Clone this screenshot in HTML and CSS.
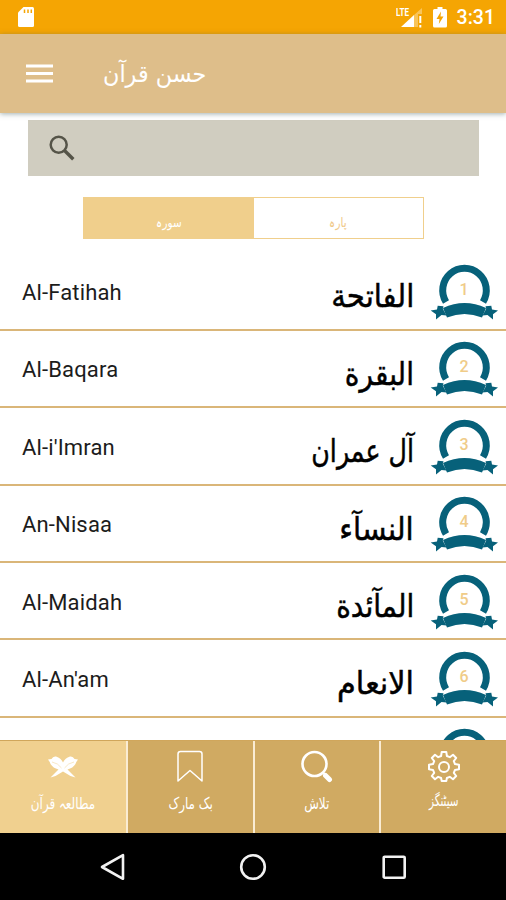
FILE: index.html
```html
<!DOCTYPE html>
<html lang="en">
<head>
    <meta charset="UTF-8">
    <meta name="viewport" content="width=device-width, initial-scale=1.0">
    <title>حسن قرآن</title>
    <link rel="stylesheet" href="styles.css">
</head>
<body>
    <!-- Shared shapes -->
    <svg class="defs" width="0" height="0">
        <symbol id="badge" viewBox="0 0 68 56">
            <path d="M16 38A21.8 22 0 1 1 53 38" fill="none" stroke="#07617a" stroke-width="7"/>
            <path d="M13 44Q34.5 34 56 44L52 53.5Q34.5 46.5 17 53.5Z" fill="#07617a"/>
            <path d="M13.5 42.3L7.7 41.8L7 45.4L.7 46.5L6 50.3V55.5L11.5 51L16.5 51.5L12.8 44.8Z" fill="#07617a"/>
            <path d="M55.5 42.3L61.3 41.8L62 45.4L68 46.5L63 50.3V55.5L57.5 51L52.5 51.5L56.2 44.8Z" fill="#07617a"/>
        </symbol>
    </svg>

    <div class="status-bar">
        <svg width="16" height="21" viewBox="0 0 16 21">
            <path d="M5.5 0H14.5Q16 0 16 1.5V18.5Q16 20 14.5 20H1.5Q0 20 0 18.5V5.5Z" fill="#fff"/>
            <path d="M6.5 2.5V6M10 2.5V6M13.3 2.5V6" stroke="#f5a503" stroke-width="1.5"/>
        </svg>
        <div class="status-icons">
            <svg width="27" height="21" viewBox="0 0 27 21">
                <text x="0" y="8.5" class="lte" textLength="13" lengthAdjust="spacingAndGlyphs">LTE</text>
                <path d="M5 20L18 8V20Z" fill="#fff"/>
                <path d="M18 8L26 1V7H22V20H18Z" fill="#fff" opacity=".35"/>
                <path d="M24.3 9V16M24.3 18V20.5" stroke="#fff" stroke-width="2"/>
            </svg>
            <svg width="14" height="21" viewBox="0 0 14 21">
                <path d="M1.5 2H4.5V0H9.5V2H12.5Q14 2 14 3.5V19Q14 20.5 12.5 20.5H1.5Q0 20.5 0 19V3.5Q0 2 1.5 2Z" fill="#fff"/>
                <path d="M8 4.5L3.5 12H6.5L5.8 17L10.5 9.5H7.5Z" fill="#f5a503"/>
            </svg>
            <span class="time">3:31</span>
        </div>
    </div>

    <div class="toolbar">
        <svg width="27" height="20" viewBox="0 0 27 20">
            <path d="M0 2H27M0 9.5H27M0 17H27" stroke="#fff" stroke-width="3"/>
        </svg>
        <h1 lang="ur" dir="rtl">حسن قرآن</h1>
    </div>

    <div class="content">
        <div class="search">
            <svg width="26" height="26" viewBox="0 0 26 26" fill="none" stroke="#555448">
                <circle cx="9.7" cy="9.7" r="8" stroke-width="2.5"/>
                <path d="M15.5 15.5L24.3 24.3" stroke-width="3.4"/>
            </svg>
        </div>

        <div class="tabs" lang="ur">
            <div class="tab active"><span>سورہ</span></div>
            <div class="tab"><span>پارہ</span></div>
        </div>

        <!-- Surah list -->
        <div class="list">
            <div class="row">
                <span class="name">Al-Fatihah</span>
                <span class="arabic" lang="ar" dir="rtl">الفاتحة</span>
                <div class="badge"><svg width="68" height="56"><use href="#badge"/></svg><span>1</span></div>
            </div>
            <div class="row">
                <span class="name">Al-Baqara</span>
                <span class="arabic narrow" lang="ar" dir="rtl">البقرة</span>
                <div class="badge"><svg width="68" height="56"><use href="#badge"/></svg><span>2</span></div>
            </div>
            <div class="row">
                <span class="name">Al-i'Imran</span>
                <span class="arabic narrower" lang="ar" dir="rtl">آل عمران</span>
                <div class="badge"><svg width="68" height="56"><use href="#badge"/></svg><span>3</span></div>
            </div>
            <div class="row">
                <span class="name">An-Nisaa</span>
                <span class="arabic" lang="ar" dir="rtl">النسآء</span>
                <div class="badge"><svg width="68" height="56"><use href="#badge"/></svg><span>4</span></div>
            </div>
            <div class="row">
                <span class="name">Al-Maidah</span>
                <span class="arabic narrow" lang="ar" dir="rtl">المآئدة</span>
                <div class="badge"><svg width="68" height="56"><use href="#badge"/></svg><span>5</span></div>
            </div>
            <div class="row">
                <span class="name">Al-An'am</span>
                <span class="arabic wide" lang="ar" dir="rtl">الانعام</span>
                <div class="badge"><svg width="68" height="56"><use href="#badge"/></svg><span>6</span></div>
            </div>
            <div class="row">
                <div class="badge"><svg width="68" height="56"><use href="#badge"/></svg></div>
            </div>
        </div>
    </div>

    <!-- Bottom menu -->
    <div class="bottom-menu" lang="ur">
        <div class="menu-item active">
            <svg width="32" height="34" viewBox="0 0 32 34">
                <path d="M1 9.5L4.5 9Q6 6 9 6.5Q14 8 16 12.5Q18 8 23 6.5Q26 6 27.5 9L31 9.5Q29 12 28.5 14Q26 18 20.5 19.5L28.5 27.5L23.5 26L16 21.5L8.5 26L3.5 27.5L11.5 19.5Q6 18 3.5 14Q3 12 1 9.5Z" fill="#fff"/>
                <path d="M5 12Q11 13 14.5 18M27 12Q21 13 17.5 18" fill="none" stroke="#f0d08f" stroke-width=".5"/>
            </svg>
            <span>مطالعہ قرآن</span>
        </div>
        <div class="menu-item">
            <svg width="32" height="34" viewBox="0 0 32 34">
                <path d="M4 31V4Q4 1.5 6.5 1.5H25.5Q28 1.5 28 4V31L16 20.5Z" fill="none" stroke="#fff" stroke-width="1.5" stroke-linejoin="round"/>
            </svg>
            <span>بک مارک</span>
        </div>
        <div class="menu-item">
            <svg width="32" height="34" viewBox="0 0 32 34" fill="none" stroke="#fff">
                <circle cx="13.5" cy="14" r="12" stroke-width="2.6"/>
                <path d="M24.5 25.5L28.5 29.5" stroke-width="5" stroke-linecap="round"/>
                <path d="M22 22.5L25 25.5" stroke-width="2"/>
            </svg>
            <span>تلاش</span>
        </div>
        <div class="menu-item">
            <svg width="32" height="34" viewBox="0 0 32 34" fill="none" stroke="#fff" stroke-width="2">
                <path stroke-linejoin="round" d="M13.1 6L13.7 2H18.3L18.9 6L21.8 7.2L25 4.8L28.2 8L25.8 11.2L27 14.1L31 14.7V19.3L27 19.9L25.8 22.8L28.2 26L25 29.2L21.8 26.8L18.9 28L18.3 31H13.7L13.1 28L10.2 26.8L7 29.2L3.8 26L6.2 22.8L5 19.9L1 19.3V14.7L5 14.1L6.2 11.2L3.8 8L7 4.8L10.2 7.2Z"/>
                <circle cx="16" cy="17" r="5"/>
            </svg>
            <span class="settings">سیٹنگز</span>
        </div>
    </div>

    <div class="nav-bar">
        <svg width="28" height="28" viewBox="0 0 28 28"><path d="M3 14L24 2.2V25.8Z"/></svg>
        <svg width="28" height="28" viewBox="0 0 28 28"><circle cx="14" cy="14" r="11.8"/></svg>
        <svg width="28" height="28" viewBox="0 0 28 28"><rect x="3.7" y="3.7" width="21" height="21" rx="1"/></svg>
    </div>
</body>
</html>
```
FILE: styles.css
```css
* {
    box-sizing: border-box;
}

body {
    margin: 0;
    height: 900px;
    display: flex;
    flex-direction: column;
    overflow: hidden;
    font-family: Roboto, "DejaVu Sans", sans-serif;
    background: #fff;
}

.defs {
    display: none;
}

.status-bar {
    height: 34px;
    flex: none;
    display: flex;
    justify-content: space-between;
    padding: 7px 11px 0 18px;
    background: #f5a503;
    color: #fff;
}

.status-icons {
    display: flex;
    gap: 10px;
}

.lte {
    font-size: 11px;
    font-weight: bold;
    fill: #fff;
}

.time {
    font-size: 19.5px;
    font-weight: 500;
    line-height: 22px;
}

/* Header */
.toolbar {
    height: 79px;
    flex: none;
    display: flex;
    align-items: center;
    gap: 50px;
    padding-left: 26px;
    background: #debe8a;
    box-shadow: 0 1px 5px rgba(70, 100, 100, 0.5);
    color: #fff;
    z-index: 1;
}

.toolbar h1 {
    margin: 0;
    font-family: "DejaVu Sans", sans-serif;
    font-size: 24px;
    font-weight: normal;
    transform: scaleX(0.93);
    transform-origin: left center;
}

.content {
    flex: 1;
    min-height: 0;
    overflow: hidden;
}

.search {
    height: 56px;
    margin: 7px 27px 0 28px;
    padding: 15px 21px;
    background: #d0cdc0;
}

.tabs {
    display: flex;
    width: 341px;
    height: 42px;
    margin: 21px 0 0 83px;
    border: 1px solid #f0cf8c;
}

.tab {
    flex: 1;
    display: flex;
    align-items: center;
    justify-content: center;
    padding-top: 8px;
    font-family: "DejaVu Sans", sans-serif;
    font-size: 13px;
    color: #f0c989;
}

.tab span {
    transform: scaleX(0.8);
}

.tab.active {
    background: #f0cf8c;
    color: #fff;
}

/* Surah rows */
.list {
    margin-top: 14.4px;
}

.row {
    display: flex;
    align-items: flex-start;
    height: 77.4px;
    padding: 10px 8px 0 22px;
    border-bottom: 2px solid #dab679;
}

.name {
    margin-top: 16.6px;
    font-size: 22px;
    letter-spacing: 0.15px;
    line-height: 26px;
    color: #1c1c1c;
}

.arabic {
    margin: 13px 16px 0 auto;
    font-family: "DejaVu Sans", sans-serif;
    font-size: 32px;
    line-height: 40px;
    color: #000;
    -webkit-text-stroke: 0.5px #000;
    transform: scaleX(0.91);
    transform-origin: right center;
}

.arabic.narrow {
    transform: scaleX(0.875);
}

.arabic.narrower {
    transform: scaleX(0.79);
}

.arabic.wide {
    transform: scaleX(0.95);
}

.badge {
    display: grid;
    width: 68px;
    height: 56px;
    margin: 0.6px 0 0 auto;
}

.arabic + .badge {
    margin-left: 0;
}

.badge svg,
.badge span {
    grid-area: 1 / 1;
}

.badge span {
    padding-top: 16px;
    text-align: center;
    font-size: 16px;
    line-height: 20px;
    font-weight: 500;
    color: #f0cc88;
}

/* Bottom menu */
.bottom-menu {
    display: flex;
    height: 93px;
    flex: none;
    border-top: 1px solid #d0a65b;
    background: #d0aa62;
}

.menu-item {
    flex: 1;
    display: flex;
    flex-direction: column;
    align-items: center;
    padding-top: 9px;
    color: #fff;
    font-family: "DejaVu Sans", sans-serif;
    font-size: 16px;
    white-space: nowrap;
}

.menu-item:not(:last-child) {
    border-right: 2px solid #faecd3;
}

.menu-item.active {
    flex: none;
    width: 128px;
    background: #f0d08f;
}

.menu-item span {
    margin-top: 8px;
    line-height: 24px;
    transform: scaleX(0.75);
}

.menu-item .settings {
    margin-top: 5px;
    transform: scaleX(0.65);
}

/* System navigation */
.nav-bar {
    display: flex;
    justify-content: center;
    gap: 112.5px;
    height: 67px;
    flex: none;
    padding-top: 20px;
    background: #000;
}

.nav-bar svg {
    fill: none;
    stroke: #f2f2f2;
    stroke-width: 2.6;
    stroke-linejoin: round;
}
```
